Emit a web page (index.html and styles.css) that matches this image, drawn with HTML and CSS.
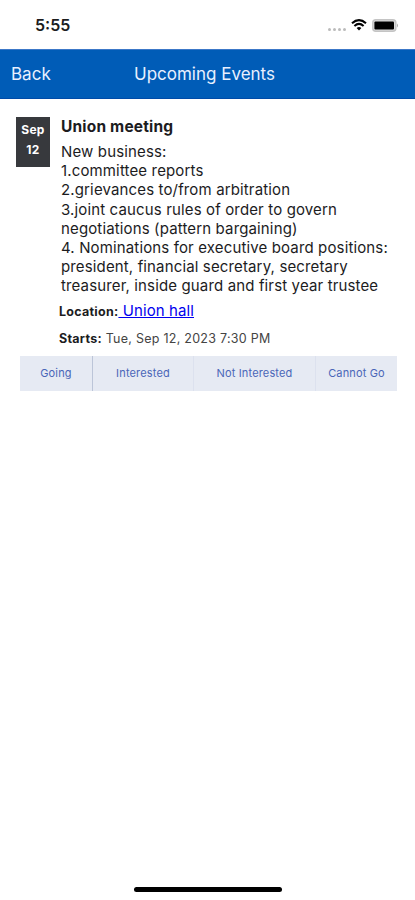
FILE: index.html
```
<!DOCTYPE html>
<html lang="en">
    <head>
        <meta charset="utf-8">
        <title>Upcoming Events</title>
        <link rel="stylesheet" href="styles.css">
    </head>
    <body>
        <div class="status_bar">
            <span class="time">5:55</span>
            <div class="status_icons">
                <div class="signal"><i></i><i></i><i></i><i></i></div>
                <svg class="wifi" width="16" height="12" viewBox="0 0 16 12">
                    <path d="M1 4.2 Q8 -2 15 4.2" fill="none" stroke="#000" stroke-width="2.1"/>
                    <path d="M3.4 7 Q8 2.8 12.6 7" fill="none" stroke="#000" stroke-width="2"/>
                    <path d="M5.6 9 Q8 7 10.4 9 L8 11.6 Z"/>
                </svg>
                <svg class="battery" width="27" height="13" viewBox="0 0 27 13">
                    <rect x="0.8" y="0.8" width="23" height="11.4" rx="3" fill="#ddd" stroke="#c4c4c4" stroke-width="1.5"/>
                    <rect x="2.4" y="2.6" width="19.6" height="7.8" rx="1"/>
                    <path d="M25 4.5 Q27 6.5 25 8.5 Z" fill="#aaa"/>
                </svg>
            </div>
        </div>

        <header>
            <a class="back">Back</a>
            <h1>Upcoming Events</h1>
        </header>

        <div class="event">
            <div class="date">
                <div>Sep</div>
                <div>12</div>
            </div>
            <div class="details">
                <h2>Union meeting</h2>
                <p class="description">New business:<br>
                1.committee reports<br>
                2.grievances to/from arbitration<br>
                3.joint caucus rules of order to govern<br>
                negotiations (pattern bargaining)<br>
                4. Nominations for executive board positions:<br>
                president, financial secretary, secretary<br>
                treasurer, inside guard and first year trustee</p>
                <p class="location"><b>Location:</b><a href="#">&nbsp;Union hall</a></p>
                <p class="starts"><b>Starts:</b> Tue, Sep 12, 2023 7:30 PM</p>
            </div>
        </div>

        <div class="responses">
            <div class="response going">Going</div>
            <div class="response">Interested</div>
            <div class="response">Not Interested</div>
            <div class="response">Cannot Go</div>
        </div>

        <div class="home_bar"></div>
    </body>
</html>
```

FILE: styles.css
```
* {
    box-sizing: border-box;
}
body {
    margin: 0;
    height: 900px;
    display: flex;
    flex-direction: column;
    background-color: white;
    color: #1c1c1e;
    font-family: Inter, "Liberation Sans", sans-serif;
}
h1, h2, p {
    margin: 0;
}
.status_bar {
    height: 49px;
    padding: 1px 16px 0 35px;
    display: flex;
    align-items: center;
    justify-content: space-between;
}
.time {
    font-size: 16px;
    font-weight: 600;
}
.status_icons {
    display: flex;
    align-items: center;
    gap: 5px;
}
.signal {
    display: flex;
    gap: 2px;
    padding-top: 8px;
}
.signal i {
    width: 3px;
    height: 3px;
    border-radius: 50%;
    background-color: #bbb;
}
header {
    height: 50px;
    padding: 0 11px;
    display: grid;
    grid-template-columns: 1fr auto 1fr;
    align-items: center;
    background-color: #005cb7;
    border-top: 1px solid #3c78c8;
    border-bottom: 1px solid #004ba8;
    color: #e8f0ff;
}
.back {
    font-size: 17px;
}
h1 {
    font-size: 17px;
    font-weight: 400;
    padding-right: 6px;
}
.event {
    display: flex;
    gap: 11px;
    padding: 18px 0 0 16px;
}
.date {
    width: 34px;
    height: 50px;
    padding-top: 3px;
    background-color: #37393d;
    color: white;
    font-size: 12px;
    font-weight: 700;
    line-height: 20px;
    letter-spacing: 0.3px;
    text-align: center;
}
h2 {
    font-size: 15.5px;
    font-weight: 700;
    line-height: 20px;
    letter-spacing: 0.18px;
}
.description {
    margin-top: 5px;
    font-size: 15px;
    line-height: 19.2px;
    letter-spacing: 0.14px;
    white-space: nowrap;
}
.location, .starts {
    margin-left: -2px;
    font-size: 12.5px;
    line-height: 20px;
    letter-spacing: 0.26px;
}
.location {
    margin-top: 5px;
}
.location a {
    font-size: 15px;
    letter-spacing: 0.1px;
    color: #0000ee;
}
.starts {
    margin-top: 7px;
    color: #444;
}
b {
    color: #1c1c1e;
}
.responses {
    width: 377px;
    height: 35px;
    margin: 7px 0 0 20px;
    display: grid;
    grid-template-columns: 73px 101px 122px 81px;
    background-color: #e6eaf3;
}
.response {
    border-right: 1px solid #dce1ee;
    color: #4a66b8;
    font-size: 11px;
    line-height: 34px;
    letter-spacing: 0.16px;
    text-align: center;
}
.going {
    border-right-color: #bcc5d8;
}
.response:last-child {
    border-right: none;
}
.home_bar {
    width: 148px;
    height: 5px;
    margin: auto auto 8px 134px;
    border-radius: 3px;
    background-color: black;
}
```
